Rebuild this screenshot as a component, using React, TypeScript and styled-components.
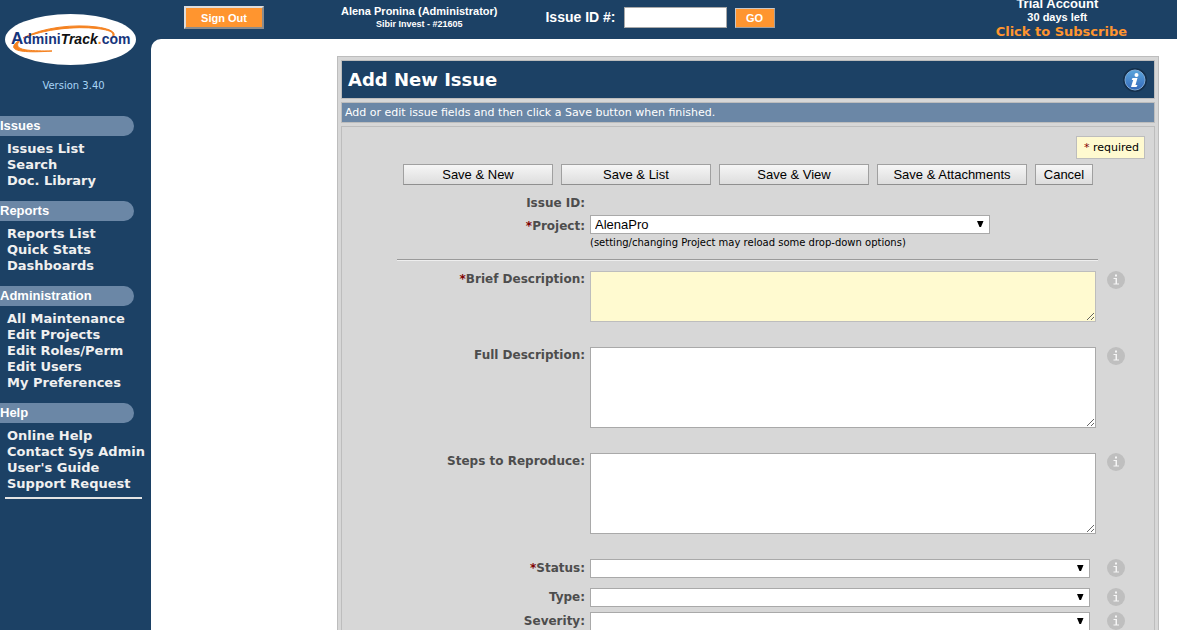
import React from 'react';
import styled, { createGlobalStyle } from 'styled-components';

const navy = '#1c4165';
const steel = '#6b87a6';
const orange = '#ff952f';
const panelGrey = '#d7d7d7';
const lineGrey = '#bdbdbd';
const cream = '#fffad0';
const arial = '"Liberation Sans", Arial, sans-serif';
const verdana = 'Verdana, "DejaVu Sans", sans-serif';

const GlobalStyle = createGlobalStyle`
  * { box-sizing: border-box; }
  html { scrollbar-width: none; }
  body { margin: 0; background: ${navy}; font-family: ${verdana}; }
  a { text-decoration: none; }
`;

const Page = styled.div`
  display: flex;
  min-height: 100vh;
`;

const Sidebar = styled.aside`
  flex: 0 0 151px;
  padding-top: 14px;
  color: #fff;
`;

const LogoLink = styled.a`
  display: block;
  margin-left: 5px;
  height: 51px;
`;

const Version = styled.p`
  margin: 13px 0 22px;
  padding-right: 4px;
  text-align: center;
  font-size: 10px;
  line-height: 16px;
  color: #a8d4f5;
`;

const NavTitle = styled.h2`
  width: 134px;
  margin: 0;
  border-radius: 0 10px 10px 0;
  background: ${steel};
  font: bold 13px/20px ${arial};
`;

const NavList = styled.ul`
  list-style: none;
  margin: 0;
  padding: 4px 0 13px 7px;
`;

const NavItem = styled.li`
  height: 16px;
  line-height: 16px;
  white-space: nowrap;
`;

const NavLink = styled.a`
  font-weight: bold;
  font-size: 13px;
  color: #f0f0f0;
`;

const NavRule = styled.hr`
  height: 2px;
  margin: -7px 9px 0 5px;
  border: 0;
  background: #e4e4e4;
`;

const Column = styled.div`
  flex: 1;
  min-width: 0;
  display: flex;
  flex-direction: column;
`;

const TopBar = styled.header`
  display: flex;
  align-items: flex-start;
  height: 39px;
  padding: 0 50px 0 33px;
  overflow: hidden;
  color: #fff;
  font: bold 11px/13px ${arial};
  white-space: nowrap;
`;

const SignOut = styled.button`
  width: 80px;
  height: 23px;
  margin-top: 6px;
  padding: 0;
  border: 2px solid;
  border-color: #dcdcdc #8c8c8c #8c8c8c #dcdcdc;
  background: ${orange};
  color: #fff;
  font: bold 11px ${arial};
`;

const Account = styled.div`
  margin: 5px 0 0 77px;
  text-align: center;
`;

const Small = styled.div`
  font-size: ${(p: { $size: number }) => p.$size}px;
`;

const JumpForm = styled.form`
  display: flex;
  align-items: center;
  gap: 8px;
  margin: 7px 0 0 48px;
`;

const JumpLabel = styled.label`
  font-size: 14px;
`;

const JumpInput = styled.input`
  width: 103px;
  height: 21px;
  border: 1px solid #a9a9a9;
  background: #fff;
`;

const Go = styled.button`
  width: 40px;
  height: 20px;
  padding: 0;
  border: 1px solid #a0a0a0;
  border-top-color: #c8c8c8;
  border-left-color: #c8c8c8;
  background: ${orange};
  color: #fff;
  font: bold 11px ${arial};
`;

const Trial = styled.div`
  margin: -4px 0 0 auto;
  text-align: center;
`;

const TrialStatus = styled.div`
  padding-right: 8px;
`;

const TrialTitle = styled.div`
  font-size: 13px;
  line-height: 15px;
`;

const Subscribe = styled.a`
  display: block;
  font: bold 13px/15px ${verdana};
  color: ${orange};
`;

const Main = styled.main`
  flex: 1;
  padding: 17px 18px 17px 186px;
  border-top-left-radius: 10px;
  background: #fff;
`;

const Panel = styled.section`
  display: flex;
  flex-direction: column;
  gap: 3px;
  padding: 3px;
  border: 1px solid ${lineGrey};
  background: ${panelGrey};
`;

const PanelHeader = styled.div`
  display: flex;
  align-items: center;
  justify-content: space-between;
  height: 39px;
  padding: 0 6px;
  border: 1px solid ${lineGrey};
  background: ${navy};
`;

const Title = styled.h1`
  margin: 0;
  font-size: 18px;
  line-height: 20px;
  color: #fff;
`;

const HelpButton = styled.button`
  width: 26px;
  height: 26px;
  padding: 0;
  border: 0;
  background: none;
`;

const Intro = styled.p`
  margin: 0;
  padding: 0 3px;
  border: 1px solid ${lineGrey};
  background: ${steel};
  color: #fff;
  font-size: 11px;
  line-height: 19px;
`;

const PanelBody = styled.form`
  display: flex;
  flex-direction: column;
  padding: 9px 0 20px;
  border: 1px solid ${lineGrey};
`;

const RequiredNote = styled.div`
  align-self: flex-end;
  margin-right: 9px;
  padding: 0 5px 0 7px;
  border: 1px solid ${lineGrey};
  background: ${cream};
  font-size: 11px;
  line-height: 21px;
  color: #000;
`;

const Star = styled.span`
  color: #800000;
`;

const Actions = styled.div`
  display: flex;
  justify-content: center;
  gap: 8px;
  margin: 5px 0 10px;
`;

const Action = styled.button<{ $wide?: boolean }>`
  width: ${(p) => (p.$wide ? 150 : 58)}px;
  height: 21px;
  padding: 0;
  border: 1px solid #a0a0a0;
  border-bottom-color: #8f8f8f;
  background: linear-gradient(#f6f6f6, #dddddd);
  color: #000;
  font: 13px ${arial};
`;

const Row = styled.div<{ $after: number }>`
  display: grid;
  grid-template-columns: 243px minmax(0, 1fr) 18px;
  column-gap: 5px;
  align-items: start;
  margin-bottom: ${(p) => p.$after}px;
  padding-right: 29px;
`;

const rowLabel = `
  text-align: right;
  font-weight: bold;
  font-size: 12px;
  color: #4d4d4d;
`;

const Label = styled.label<{ $line?: number }>`
  ${rowLabel}
  line-height: ${(p) => p.$line ?? 16}px;
`;

const StaticLabel = styled.span`
  ${rowLabel}
  line-height: 16px;
`;

const Field = styled.div`
  padding-right: 6px;
`;

const Area = styled.textarea<{ $height: number; $required?: boolean }>`
  display: block;
  width: 100%;
  height: ${(p) => p.$height}px;
  border: 1px solid ${(p) => (p.$required ? lineGrey : '#a9a9a9')};
  background: ${(p) => (p.$required ? cream : '#fff')};
  font: 13px ${arial};
`;

const SelectBox = styled.div<{ $narrow?: boolean }>`
  position: relative;
  margin-right: ${(p) => (p.$narrow ? 112 : 6)}px;
`;

const Select = styled.select`
  display: block;
  appearance: none;
  width: 100%;
  height: 19px;
  padding: 0 4px;
  border: 1px solid #a9a9a9;
  border-radius: 0;
  background: #fff;
  color: #000;
  font: 13px/17px ${arial};
`;

const Arrow = styled.svg`
  position: absolute;
  top: 6px;
  right: 6px;
  pointer-events: none;
`;

const Hint = styled.div`
  margin-top: 2px;
  font-size: 10px;
  line-height: 14px;
  color: #000;
`;

const Rule = styled.hr`
  height: 2px;
  margin: 0 56px 10px 55px;
  border: 0;
  border-top: 1px solid #9a9a9a;
  border-bottom: 1px solid #eeeeee;
`;

const InfoButton = styled.button`
  width: 18px;
  height: 18px;
  padding: 0;
  border: 0;
  background: none;
`;

const Drawing = styled.svg`
  display: block;
`;

function Logo() {
  return (
    <Drawing width="131" height="51" viewBox="0 0 131 51" role="img" aria-label="AdminiTrack.com">
      <ellipse cx="65.500" cy="25.500" rx="65.500" ry="25.500" fill="#fff" />
      <path d="M18 24 C38 13 70 10 92 13 C106 15 114 19 106 25 C112 18 104 16 92 14.500 C70 12 40 15 18 24 Z" fill="#f58220" stroke="#f58220" strokeWidth="1" />
      <path d="M15 26 C2 34 7 40 47 37 C20 37 7 36 15 26 Z" fill="#f58220" stroke="#f58220" strokeWidth="1" />
      <text x="6" y="30" fontFamily="Liberation Sans, Arial, sans-serif" fontWeight="bold" fontSize="14" fill="#16357c">
        <tspan fontSize="17">A</tspan>dmini<tspan fontStyle="italic" fill="#111">Track</tspan><tspan fill="#f58220">.</tspan>com
      </text>
    </Drawing>
  );
}

function InfoIcon() {
  return (
    <Drawing width="18" height="18" viewBox="0 0 18 18" aria-hidden="true">
      <circle cx="9" cy="9" r="9" fill="#bfbfbf" />
      <path d="M8 3.500h2v2H8z M6.500 7H10v5.500h2v1H6.500v-1h2V8h-2z" fill="#f6f6f6" />
    </Drawing>
  );
}

function HelpIcon() {
  return (
    <Drawing width="26" height="26" viewBox="0 0 26 26" aria-hidden="true">
      <defs>
        <linearGradient id="ball" x1="0" y1="0" x2="0" y2="1">
          <stop offset="0" stopColor="#5aa5dc" />
          <stop offset="1" stopColor="#3569ba" />
        </linearGradient>
      </defs>
      <circle cx="13" cy="13" r="12" fill="#15304c" />
      <circle cx="13" cy="13" r="10" fill="url(#ball)" stroke="#7faad6" />
      <circle cx="14.500" cy="8" r="2" fill="#fff" />
      <path d="M10.500 11h5l-2 7h2l-1 2h-5.500l2.200-7h-1.500z" fill="#fff" />
    </Drawing>
  );
}

function Dropdown({ id, narrow, value }: { id: string; narrow?: boolean; value?: string }) {
  return (
    <SelectBox $narrow={narrow}>
      <Select id={id} defaultValue={value ?? ''}>
        <option value={value ?? ''}>{value ?? ''}</option>
      </Select>
      <Arrow width="7" height="7" viewBox="0 0 7 7" aria-hidden="true">
        <path d="M0 0h6.500L4 6H2.500z" fill="#000" />
      </Arrow>
    </SelectBox>
  );
}

const menu = [
  { title: 'Issues', links: ['Issues List', 'Search', 'Doc. Library'] },
  { title: 'Reports', links: ['Reports List', 'Quick Stats', 'Dashboards'] },
  { title: 'Administration', links: ['All Maintenance', 'Edit Projects', 'Edit Roles/Perm', 'Edit Users', 'My Preferences'] },
  { title: 'Help', links: ['Online Help', 'Contact Sys Admin', "User's Guide", 'Support Request'] },
];

const areas = [
  { id: 'brief', label: 'Brief Description:', height: 51, required: true },
  { id: 'full', label: 'Full Description:', height: 81, required: false },
  { id: 'steps', label: 'Steps to Reproduce:', height: 81, required: false },
];

const choices = [
  { id: 'status', label: 'Status:', required: true, after: 10 },
  { id: 'type', label: 'Type:', required: false, after: 5 },
  { id: 'severity', label: 'Severity:', required: false, after: 5 },
];

export default function App() {
  return (
    <>
      <GlobalStyle />
      <Page>
        <Sidebar>
          <LogoLink href="#"><Logo /></LogoLink>
          <Version>Version 3.40</Version>
          <nav>
            {menu.map((group) => (
              <React.Fragment key={group.title}>
                <NavTitle>{group.title}</NavTitle>
                <NavList>
                  {group.links.map((link) => (
                    <NavItem key={link}><NavLink href="#">{link}</NavLink></NavItem>
                  ))}
                </NavList>
              </React.Fragment>
            ))}
          </nav>
          <NavRule />
        </Sidebar>
        <Column>
          <TopBar>
            <SignOut type="button">Sign Out</SignOut>
            <Account>
              <Small $size={11}>Alena Pronina (Administrator)</Small>
              <Small $size={9}>Sibir Invest - #21605</Small>
            </Account>
            <JumpForm>
              <JumpLabel htmlFor="jump">Issue ID #:</JumpLabel>
              <JumpInput id="jump" type="text" />
              <Go type="button">GO</Go>
            </JumpForm>
            <Trial>
              <TrialStatus>
                <TrialTitle>Trial Account</TrialTitle>
                <Small $size={11}>30 days left</Small>
              </TrialStatus>
              <Subscribe href="#">Click to Subscribe</Subscribe>
            </Trial>
          </TopBar>
          <Main>
            <Panel>
              <PanelHeader>
                <Title>Add New Issue</Title>
                <HelpButton type="button" aria-label="Help"><HelpIcon /></HelpButton>
              </PanelHeader>
              <Intro>Add or edit issue fields and then click a Save button when finished.</Intro>
              <PanelBody>
                <RequiredNote><Star>*</Star> required</RequiredNote>
                <Actions>
                  <Action type="button" $wide>Save &amp; New</Action>
                  <Action type="button" $wide>Save &amp; List</Action>
                  <Action type="button" $wide>Save &amp; View</Action>
                  <Action type="button" $wide>Save &amp; Attachments</Action>
                  <Action type="button">Cancel</Action>
                </Actions>
                <Row $after={4}>
                  <StaticLabel>Issue ID:</StaticLabel>
                </Row>
                <Row $after={9}>
                  <Label htmlFor="project" $line={22}><Star>*</Star>Project:</Label>
                  <div>
                    <Dropdown id="project" narrow value="AlenaPro" />
                    <Hint>(setting/changing Project may reload some drop-down options)</Hint>
                  </div>
                </Row>
                <Rule />
                {areas.map((a) => (
                  <Row key={a.id} $after={25}>
                    <Label htmlFor={a.id}>{a.required && <Star>*</Star>}{a.label}</Label>
                    <Field><Area id={a.id} $height={a.height} $required={a.required} /></Field>
                    <InfoButton type="button" aria-label="Info"><InfoIcon /></InfoButton>
                  </Row>
                ))}
                {choices.map((c) => (
                  <Row key={c.id} $after={c.after}>
                    <Label htmlFor={c.id} $line={19}>{c.required && <Star>*</Star>}{c.label}</Label>
                    <Field><Dropdown id={c.id} /></Field>
                    <InfoButton type="button" aria-label="Info"><InfoIcon /></InfoButton>
                  </Row>
                ))}
              </PanelBody>
            </Panel>
          </Main>
        </Column>
      </Page>
    </>
  );
}
